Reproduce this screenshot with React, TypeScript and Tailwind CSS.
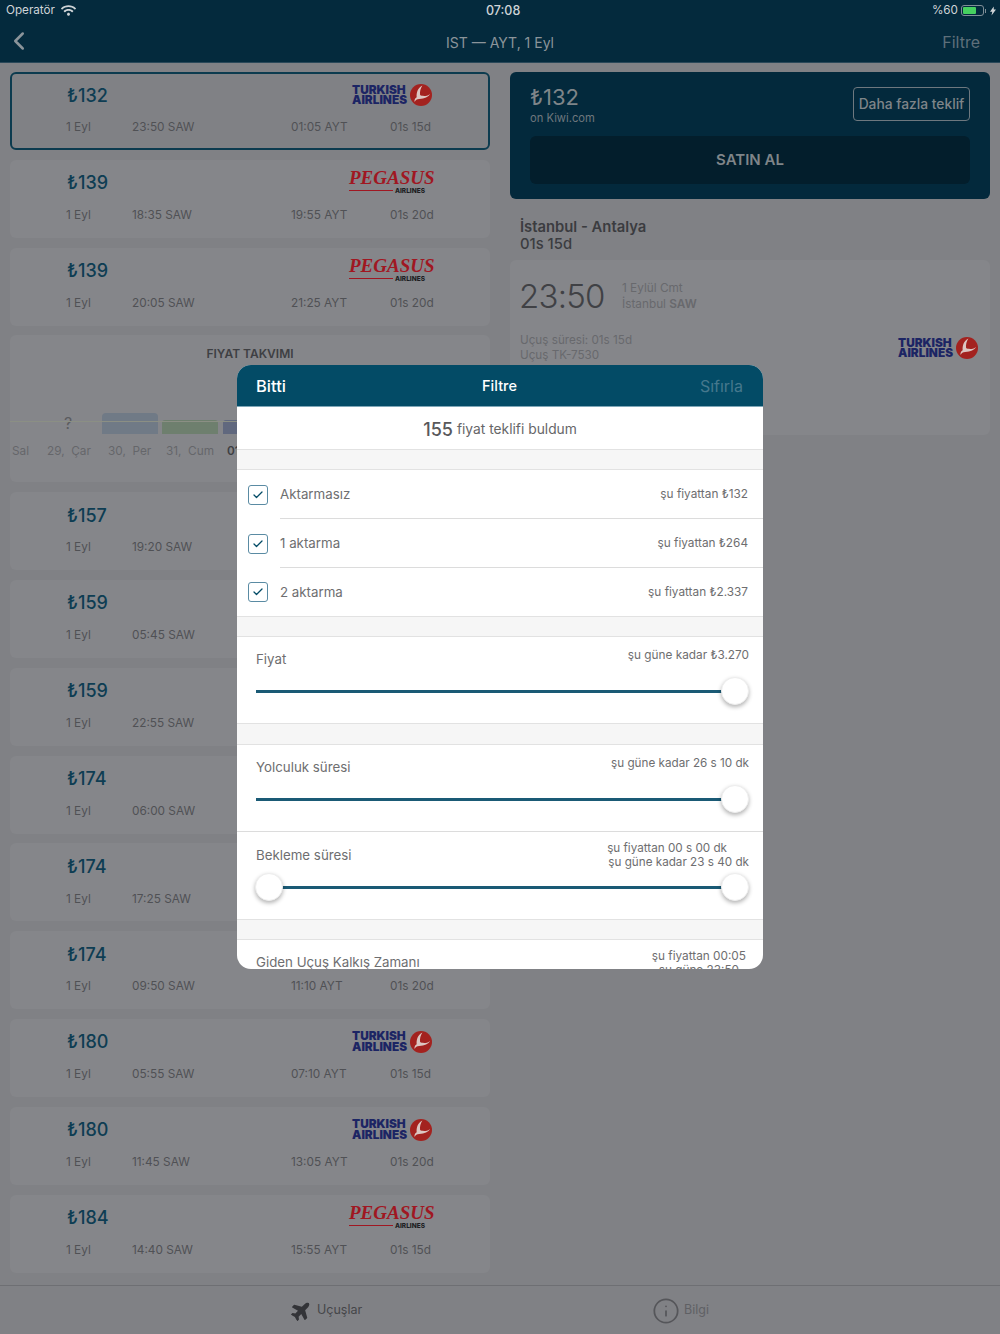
import { FaPlane, FaWifi } from "react-icons/fa"
import { ChevronLeft, Check, Info } from "lucide-react"

type Flight = {
  price: string
  dep: string
  arr?: string
  dur?: string
  airline?: "thy" | "pegasus"
}

function TurkishLogo() {
  return (
    <div className="flex items-center gap-[3px]">
      <div className="text-[11.8px] leading-[10.5px] font-black text-[#1c2564] font-['Inter',sans-serif]">
        TURKISH<br />AIRLINES
      </div>
      <svg viewBox="0 0 24 24" className="w-[22px] h-[22px]">
        <circle cx="12" cy="12" r="12" fill="#a3221f" />
        <path d="M13.500 1.500c-2 3-3 6.500-2.500 10.500 1.500 1 4 1.200 7.500.8 1.200-.2 2.500-.8 3.500-1.800-2 3-6 5.300-12 5.300-2.500 0-4 1.200-5 3.200-.5-2 .5-4 2.300-5-.5-5 1.200-10.500 6.200-13z" fill="#dcc6c2" />
      </svg>
    </div>
  )
}

function PegasusLogo() {
  return (
    <div className="flex flex-col w-[83px] -mt-[2px]">
      <div className="text-[19px] leading-[18px] font-bold italic text-[#a01722] font-['Liberation_Serif',serif] whitespace-nowrap">
        PEGASUS
      </div>
      <div className="flex items-center gap-[2px]">
        <div className="h-[1px] w-[44px] bg-[#a01722]" />
        <div className="text-[6.5px] leading-[8px] font-extrabold text-[#1d1d22]">AIRLINES</div>
      </div>
    </div>
  )
}

function FlightCard({ price, dep, arr, dur, airline, selected }: Flight & { selected?: boolean }) {
  return (
    <div className={`flex flex-col h-[78px] shrink-0 rounded-md border-2 pl-[54px] pt-[7px] ${selected ? "border-[#0c3b4f]" : "border-transparent bg-[#85868a]"}`}>
      <div className="flex items-center justify-between h-[28px] mr-[56px]">
        <span className="pl-[1px] text-[18px] text-[#0e3d53] font-medium">{price}</span>
        {airline === "thy" && <TurkishLogo />}
        {airline === "pegasus" && <PegasusLogo />}
      </div>
      <div className="flex items-center h-[16px] mt-[11px] text-[11.8px] text-[#505155] whitespace-nowrap">
        <span className="w-[66px] shrink-0">1 Eyl</span>
        <span className="w-[159px] shrink-0">{dep} SAW</span>
        {arr && <span className="w-[99px] shrink-0">{arr} AYT</span>}
        {dur && <span className="shrink-0">{dur}</span>}
      </div>
    </div>
  )
}

function PriceCalendar() {
  return (
    <div className="flex flex-col h-[147px] shrink-0 rounded-md bg-[#85868a] overflow-hidden">
      <div className="text-center text-[12px] font-semibold text-[#3e3f43] mt-[11px] h-[16px] leading-[16px]">FIYAT TAKVIMI</div>
      <div className="relative flex items-end h-[72px] pl-[29px] gap-[4.5px]">
        <div className="absolute left-0 right-0 top-[59px] h-[1px] bg-[#8b8f84]" />
        <div className="w-[58px] text-center text-[16px] leading-[22px] text-[#5b5c60]">?</div>
        <div className="w-[56px] h-[21px] rounded-t-[4px] bg-[#707a86]" />
        <div className="w-[56px] h-[14px] rounded-t-[3px] bg-[#6e7f6e]" />
        <div className="w-[56px] h-[14px] rounded-t-[3px] bg-[#60687e]" />
      </div>
      <div className="flex mt-[9px] h-[16px] text-[11.8px] leading-[16px] text-[#65666a] whitespace-nowrap">
        <span className="ml-[2px] w-[35px] shrink-0">Sal</span>
        <span className="w-[61px] shrink-0">29, &nbsp;Çar</span>
        <span className="w-[58px] shrink-0">30, &nbsp;Per</span>
        <span className="w-[61px] shrink-0">31, &nbsp;Cum</span>
        <span className="font-semibold text-[#3e3f43]">01</span>
      </div>
    </div>
  )
}

function CheckRow({ label, price, last }: { label: string; price: string; last?: boolean }) {
  return (
    <div className={`flex items-center shrink-0 pl-[11px] ${last ? "h-[48px]" : "h-[49px]"}`}>
      <div className="flex items-center justify-center w-[20px] h-[20px] rounded-[3px] border-[1.5px] border-[#5a8ba3] shrink-0">
        <Check size={12} strokeWidth={2.5} className="text-[#034b66]" />
      </div>
      <div className={`flex items-center justify-between h-full grow ml-[12px] pr-[15px] pt-[1px] ${last ? "" : "border-b border-[#dcdcdc]"}`}>
        <span className="text-[13.3px] text-[#6e6e70]">{label}</span>
        <span className="text-[11.8px] text-[#6e6e70]">{price}</span>
      </div>
    </div>
  )
}

function Band({ tall }: { tall?: boolean }) {
  return <div className={`bg-[#f6f6f6] border-y border-[#e2e2e2] shrink-0 ${tall ? "h-[22px]" : "h-[21px]"}`} />
}

const thumb = "absolute top-0 w-[28px] h-[28px] rounded-full bg-white shadow-[0_2px_4px_rgba(0,0,0,0.3)] border border-[#eeeeee]"

function SliderTrack({ startThumb }: { startThumb?: boolean }) {
  return (
    <div className="relative h-[28px]">
      <div className="absolute left-0 right-[14px] top-[12.5px] h-[3px] bg-[#1a5a75]" />
      {startThumb && <div className={`${thumb} left-[-1px]`} />}
      <div className={`${thumb} right-0`} />
    </div>
  )
}

function FilterModal() {
  return (
    <div className="absolute left-[237px] top-[365px] w-[526px] h-[604px] rounded-[14px] bg-white overflow-hidden flex flex-col font-['Inter',sans-serif]">
      <div className="relative grid grid-cols-3 items-center h-[42px] bg-[#034b66] pl-[19px] pr-[20px] pt-[1px] border-b border-[#7fa7b8] shrink-0">
        <span className="text-[16.5px] font-medium text-white">Bitti</span>
        <span className="text-center text-[14.5px] font-medium text-white">Filtre</span>
        <span className="text-right text-[16px] text-[#46788d]">Sıfırla</span>
      </div>
      <div className="flex items-center justify-center h-[42px] pt-[3px] text-[13.8px] text-[#666668] gap-[4px] shrink-0">
        <span className="text-[18px] font-medium text-[#58585a]">155</span> fiyat teklifi buldum
      </div>
      <Band />
      <CheckRow label="Aktarmasız" price="şu fiyattan ₺132" />
      <CheckRow label="1 aktarma" price="şu fiyattan ₺264" />
      <CheckRow label="2 aktarma" price="şu fiyattan ₺2.337" last />
      <Band />
      <div className="h-[86px] pl-[19px] pr-[14px] shrink-0">
        <div className="flex justify-between h-[40px] text-[#6e6e70]">
          <span className="text-[13.3px] pt-[13px]">Fiyat</span>
          <span className="text-[11.8px] pt-[10px]">şu güne kadar ₺3.270</span>
        </div>
        <SliderTrack />
      </div>
      <Band tall />
      <div className="h-[87px] pl-[19px] pr-[14px] border-b border-[#dcdcdc] shrink-0">
        <div className="flex justify-between h-[40px] text-[#6e6e70]">
          <span className="text-[13.3px] pt-[13px]">Yolculuk süresi</span>
          <span className="text-[11.7px] pt-[10px]">şu güne kadar 26 s 10 dk</span>
        </div>
        <SliderTrack />
      </div>
      <div className="h-[87px] pl-[19px] pr-[14px] shrink-0">
        <div className="flex justify-between h-[41px] text-[#6e6e70]">
          <span className="text-[13.3px] pt-[14px]">Bekleme süresi</span>
          <div className="text-[11.7px] leading-[14px] pt-[9px] text-right">
            <div className="pr-[22px]">şu fiyattan 00 s 00 dk</div>
            <div>şu güne kadar 23 s 40 dk</div>
          </div>
        </div>
        <SliderTrack startThumb />
      </div>
      <Band />
      <div className="flex justify-between pl-[19px] pr-[17px] text-[#6e6e70] shrink-0">
        <span className="text-[13.3px] pt-[13px]">Giden Uçuş Kalkış Zamanı</span>
        <div className="text-[11.8px] leading-[14px] pt-[9px] text-center">
          <div>şu fiyattan 00:05</div>
          <div>şu güne 23:50</div>
        </div>
      </div>
    </div>
  )
}

const top: (Flight & { selected?: boolean })[] = [
  { price: "₺132", dep: "23:50", arr: "01:05", dur: "01s 15d", airline: "thy", selected: true },
  { price: "₺139", dep: "18:35", arr: "19:55", dur: "01s 20d", airline: "pegasus" },
  { price: "₺139", dep: "20:05", arr: "21:25", dur: "01s 20d", airline: "pegasus" },
]

const rest: Flight[] = [
  { price: "₺157", dep: "19:20" },
  { price: "₺159", dep: "05:45" },
  { price: "₺159", dep: "22:55" },
  { price: "₺174", dep: "06:00" },
  { price: "₺174", dep: "17:25" },
  { price: "₺174", dep: "09:50", arr: "11:10", dur: "01s 20d" },
  { price: "₺180", dep: "05:55", arr: "07:10", dur: "01s 15d", airline: "thy" },
  { price: "₺180", dep: "11:45", arr: "13:05", dur: "01s 20d", airline: "thy" },
  { price: "₺184", dep: "14:40", arr: "15:55", dur: "01s 15d", airline: "pegasus" },
]

export default function App() {
  return (
    <div className="relative flex flex-col w-[1000px] h-[1334px] overflow-hidden bg-[#808185] font-['Inter',sans-serif]">
      <div className="bg-[#042a3d] h-[63px] shrink-0 border-b border-[#2a4859]">
        <div className="relative flex items-center justify-between h-[20px] pt-[2px] pl-[6px] pr-[4px] text-[11.7px] text-[#cfd4d7]">
          <div className="flex items-center gap-[6px]">
            <span>Operatör</span>
            <FaWifi size={15} />
          </div>
          <span className="absolute left-[486px] text-[12.5px] font-medium">07:08</span>
          <div className="flex items-center">
            <span>%60</span>
            <div className="ml-[3px] w-[23px] h-[11px] rounded-[3px] border border-[#7f8e97] p-[1px]">
              <div className="h-full w-[13px] rounded-[1px] bg-[#46d160]" />
            </div>
            <div className="w-[1px] h-[4px] ml-[1px] bg-[#7f8e97]" />
            <svg viewBox="0 0 8 12" className="w-[6px] h-[10px] ml-[4px]"><path d="M5 0 0 7h3l-1 5 6-8H5z" fill="#cfd4d7" /></svg>
          </div>
        </div>
        <div className="relative flex items-center justify-center h-[42px] pt-[2px]">
          <ChevronLeft size={30} strokeWidth={2} className="absolute left-[4px] top-[6px] text-[#8b949a]" />
          <span className="text-[14px] text-[#8b949a]">IST — AYT, 1 Eyl</span>
          <span className="absolute right-[20px] text-[16px] text-[#5e6f7a]">Filtre</span>
        </div>
      </div>

      <div className="flex gap-[20px] px-[10px] pt-[9px] grow min-h-0">
        <div className="flex flex-col gap-[9.8px] w-[480px] shrink-0">
          {top.map((f, i) => <FlightCard key={i} {...f} />)}
          <PriceCalendar />
          {rest.map((f, i) => <FlightCard key={i} {...f} />)}
        </div>

        <div className="w-[480px] shrink-0">
          <div className="h-[127px] rounded-md bg-[#03293c] px-[20px] pt-[12px]">
            <div className="flex justify-between">
              <div className="flex flex-col">
                <span className="text-[22px] leading-[26px] text-[#7f8589]">₺132</span>
                <span className="text-[11.2px] leading-[16px] text-[#6e777d]">on Kiwi.com</span>
              </div>
              <div className="flex items-center justify-center w-[117px] h-[34px] mt-[3px] pt-[1px] rounded-[4px] border border-[#6e787f] text-[13.8px] font-medium text-[#7f8589]">Daha fazla teklif</div>
            </div>
            <div className="flex items-center justify-center h-[48px] mt-[10px] pt-[1px] rounded-md bg-[#031e2c] text-[15px] font-semibold text-[#7f8589]">SATIN AL</div>
          </div>
          <div className="pl-[10px] mt-[20px] text-[14.8px] leading-[17px] text-[#3b3c40]">
            <div className="font-semibold">İstanbul - Antalya</div>
            <div className="font-medium">01s 15d</div>
          </div>
          <div className="h-[175px] mt-[7px] rounded-md bg-[#85868a] pl-[10px] pr-[12px] pt-[13px]">
            <div className="flex items-center">
              <span className="text-[33px] leading-[46px] font-light tracking-[-0.8px] -ml-[1px] text-[#404145] w-[103px]">23:50</span>
              <div className="text-[11.8px] leading-[16px] text-[#68696d]">
                <div>1 Eylül Cmt</div>
                <div>İstanbul <span className="font-semibold">SAW</span></div>
              </div>
            </div>
            <div className="flex items-center justify-between mt-[14px]">
              <div className="text-[11.7px] leading-[15px] text-[#68696d]">
                <div>Uçuş süresi: 01s 15d</div>
                <div>Uçuş TK-7530</div>
              </div>
              <TurkishLogo />
            </div>
          </div>
        </div>
      </div>

      <div className="absolute bottom-0 left-0 right-0 flex h-[49px] pt-[1px] bg-[#808185] border-t border-[#6e6f73]">
        <div className="flex items-center ml-[291px] w-[361px]">
          <FaPlane size={21} className="-rotate-45 text-[#333438]" />
          <span className="ml-[5px] text-[12.5px] text-[#454649]">Uçuşlar</span>
        </div>
        <div className="flex items-center">
          <Info size={28} strokeWidth={1.5} className="text-[#55565a]" />
          <span className="ml-[4px] text-[12.5px] text-[#5f6064]">Bilgi</span>
        </div>
      </div>

      <FilterModal />
    </div>
  )
}
